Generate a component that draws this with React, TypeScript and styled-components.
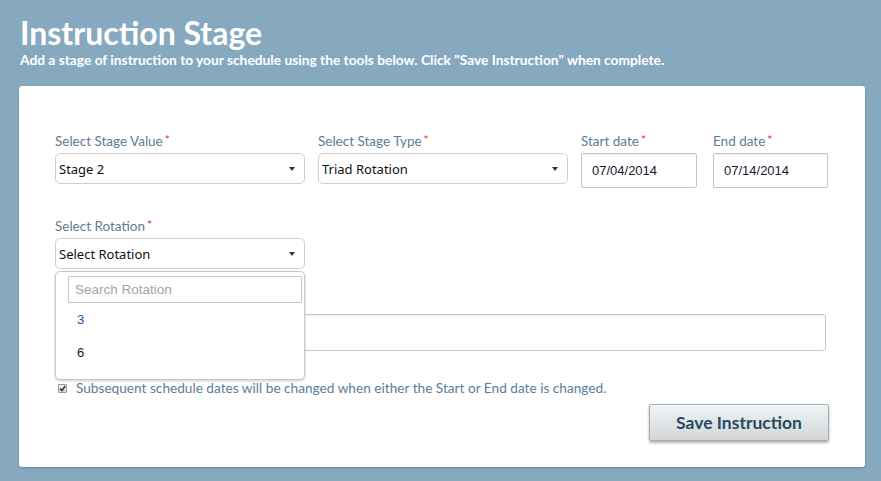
import React from "react";
import styled, { createGlobalStyle } from "styled-components";

const GlobalStyle = createGlobalStyle`
  html, body { margin: 0; padding: 0; }
  body {
    background: #87a9c0;
    font-family: Lato, "Open Sans", sans-serif;
    width: 881px;
    height: 481px;
    overflow: hidden;
  }
`;

const Page = styled.div`
  padding: 14px 16px 0 19px;
`;

const Title = styled.h1`
  margin: 0;
  font-family: Lato, sans-serif;
  font-weight: 700;
  font-size: 32px;
  line-height: 38px;
  color: #ffffff;
  padding-left: 1px;
`;

const Subtitle = styled.p`
  margin: 0;
  font-weight: 700;
  font-size: 13.75px;
  line-height: 16px;
  color: #ffffff;
  padding-left: 1px;
  white-space: nowrap;
`;

const Card = styled.div`
  margin-top: 18px;
  width: 846px;
  height: 381px;
  box-sizing: border-box;
  background: #ffffff;
  border-radius: 3px;
  box-shadow: 0 1px 2px rgba(40, 70, 90, 0.35);
  padding: 44px 36px 0 36px;
`;

const Row = styled.div<{ $mt?: number }>`
  display: flex;
  align-items: flex-start;
  margin-top: ${(p) => p.$mt ?? 0}px;
`;

const Field = styled.div<{ $w: number; $mr?: number }>`
  position: relative;
  width: ${(p) => p.$w}px;
  margin-right: ${(p) => p.$mr ?? 0}px;
  display: flex;
  flex-direction: column;
`;

const Label = styled.label`
  font-size: 13.5px;
  line-height: 19px;
  height: 19px;
  color: #5b7d97;
  margin-bottom: 4px;
  white-space: nowrap;
`;

const Req = styled.span`
  color: #e0322c;
  margin-left: 2px;
  font-size: 12px;
  vertical-align: 2px;
`;

const Select = styled.div`
  height: 31px;
  box-sizing: border-box;
  border: 1px solid #cfcfcf;
  border-radius: 5px;
  display: flex;
  align-items: center;
  justify-content: space-between;
  padding: 0 9px 0 3px;
  font-family: "Noto Sans", "Open Sans", sans-serif;
  font-size: 13px;
  color: #111;
  background: #fff;
`;

const Caret = styled.span`
  width: 0;
  height: 0;
  border-left: 3px solid transparent;
  border-right: 3px solid transparent;
  border-top: 4px solid #333;
`;

const DateInput = styled.div`
  height: 35px;
  box-sizing: border-box;
  border: 1px solid #c4c4c4;
  border-radius: 2px;
  box-shadow: inset 0 1px 1px rgba(0, 0, 0, 0.05);
  display: flex;
  align-items: center;
  padding-left: 10px;
  font-family: "Liberation Sans", Arial, sans-serif;
  font-size: 13px;
  color: #1b1630;
`;

const TextInput = styled.div`
  height: 37px;
  box-sizing: border-box;
  border: 1px solid #c8c8c8;
  border-radius: 3px;
  box-shadow: inset 0 1px 1px rgba(0, 0, 0, 0.06);
`;

const Dropdown = styled.div`
  position: absolute;
  left: 0;
  top: calc(100% + 2px);
  width: 250px;
  height: 109px;
  box-sizing: border-box;
  background: #fff;
  border: 1px solid #c8c8c8;
  border-radius: 5px;
  box-shadow: 0 1px 3px rgba(0, 0, 0, 0.2);
  padding: 4px 2px 0 12px;
  z-index: 5;
`;

const Search = styled.div`
  height: 27px;
  box-sizing: border-box;
  border: 1px solid #c6c6c6;
  border-radius: 1px;
  display: flex;
  align-items: center;
  padding-left: 6px;
  font-family: "Liberation Sans", Arial, sans-serif;
  font-size: 13.5px;
  color: #a4a4a4;
`;

const Option = styled.div<{ $active?: boolean }>`
  height: 33px;
  display: flex;
  align-items: center;
  padding-left: 9px;
  font-family: "Liberation Sans", Arial, sans-serif;
  font-size: 13px;
  color: ${(p) => (p.$active ? "#2a4f9a" : "#222")};
`;

const CheckRow = styled.div`
  display: flex;
  align-items: center;
  margin-top: 28px;
  padding-left: 3px;
  font-size: 13.65px;
  color: #5b7d97;
  line-height: 18px;
  white-space: nowrap;
`;

const Box = styled.span`
  width: 9px;
  height: 9px;
  box-sizing: border-box;
  border: 1px solid #9a9a9a;
  border-radius: 1px;
  background: linear-gradient(#f2f2f2, #d8d8d8);
  margin-right: 9px;
  display: flex;
  align-items: center;
  justify-content: center;
`;

const ButtonRow = styled.div`
  display: flex;
  justify-content: flex-end;
  margin-top: 7px;
`;

const Button = styled.button`
  width: 180px;
  height: 37px;
  border: 1px solid #a6a9ab;
  border-radius: 2px;
  background: linear-gradient(#eef5f7, #d2d6d7);
  box-shadow: 0 2px 3px rgba(0, 0, 0, 0.3), inset 0 1px 0 #fff;
  font-family: Lato, sans-serif;
  font-weight: 700;
  font-size: 17.5px;
  color: #2b4861;
  padding: 0;
`;

const Required = () => <Req>*</Req>;

export default function App() {
  return (
    <>
      <GlobalStyle />
      <Page>
        <Title>Instruction Stage</Title>
        <Subtitle>
          Add a stage of instruction to your schedule using the tools below. Click "Save Instruction" when complete.
        </Subtitle>
        <Card>
          <Row>
            <Field $w={250} $mr={13}>
              <Label>
                Select Stage Value
                <Required />
              </Label>
              <Select>
                Stage 2<Caret />
              </Select>
            </Field>
            <Field $w={250} $mr={13}>
              <Label>
                Select Stage Type
                <Required />
              </Label>
              <Select>
                Triad Rotation<Caret />
              </Select>
            </Field>
            <Field $w={116} $mr={16}>
              <Label>
                Start date
                <Required />
              </Label>
              <DateInput>07/04/2014</DateInput>
            </Field>
            <Field $w={115}>
              <Label>
                End date
                <Required />
              </Label>
              <DateInput>07/14/2014</DateInput>
            </Field>
          </Row>
          <Row $mt={27}>
            <Field $w={250}>
              <Label>
                Select Rotation
                <Required />
              </Label>
              <Select>
                Select Rotation<Caret />
              </Select>
              <Dropdown>
                <Search>Search Rotation</Search>
                <Option $active>3</Option>
                <Option>6</Option>
              </Dropdown>
            </Field>
          </Row>
          <Row $mt={22}>
            <Field $w={771}>
              <Label />
              <TextInput />
            </Field>
          </Row>
          <CheckRow>
            <Box>
              <svg width="7" height="7" viewBox="0 0 7 7">
                <path d="M1 3.5 L3 5.5 L6.2 1" stroke="#333" strokeWidth="1.5" fill="none" />
              </svg>
            </Box>
            Subsequent schedule dates will be changed when either the Start or End date is changed.
          </CheckRow>
          <ButtonRow>
            <Button>Save Instruction</Button>
          </ButtonRow>
        </Card>
      </Page>
    </>
  );
}
